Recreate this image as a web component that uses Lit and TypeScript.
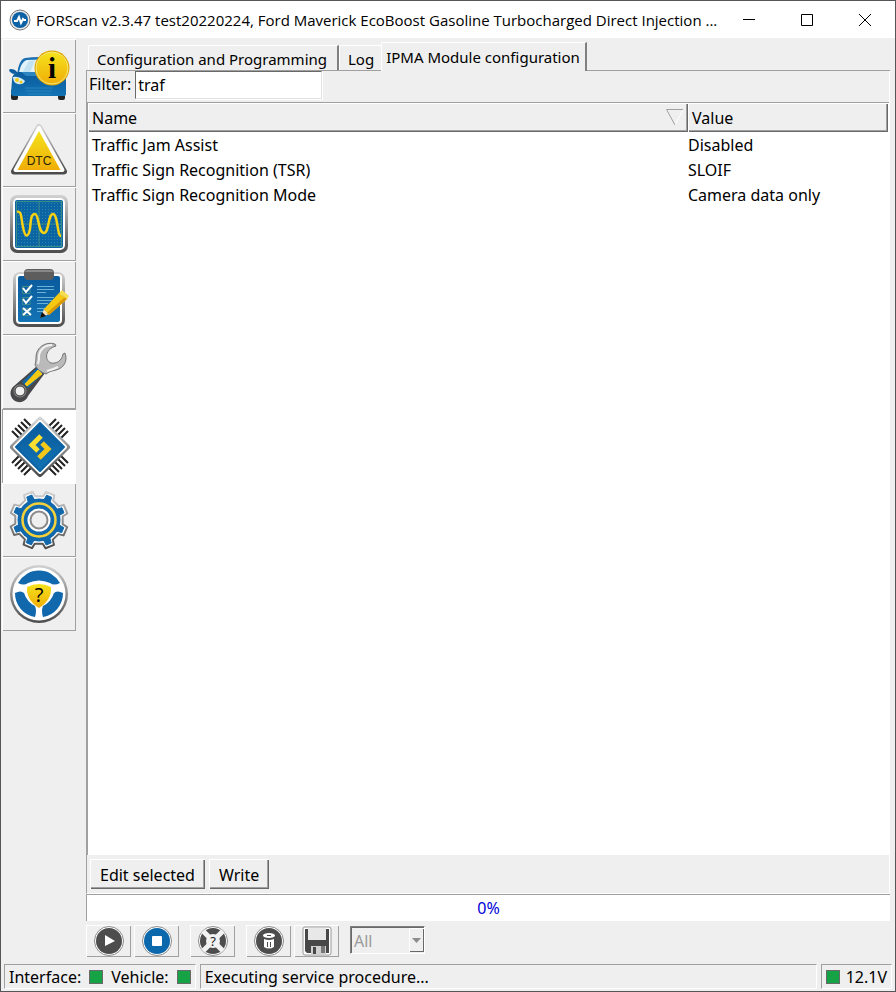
import { LitElement, html, css, svg } from "lit";
import { customElement, state } from "lit/decorators.js";
import { classMap } from "lit/directives/class-map.js";

const polar = (r: number, deg: number) => {
  const a = (deg * Math.PI) / 180;
  return `${(37 + r * Math.cos(a)).toFixed(2)} ${(37 + r * Math.sin(a)).toFixed(2)}`;
};

// Outline of an eight-tooth gear centred on 37,37; widths are half angles in degrees.
const gear = (tip: number, root: number, tipWidth: number, rootWidth: number) => {
  const pts: string[] = [];
  for (let i = 0; i < 8; i++) {
    const c = i * 45 - 67;
    pts.push(
      polar(root, c - rootWidth),
      polar(tip, c - tipWidth),
      polar(tip, c + tipWidth),
      polar(root, c + rootWidth)
    );
  }
  return `M${pts.join("L")}Z`;
};

const defs = svg`<defs>
  <linearGradient id="steel" x1="0" y1="0" x2="0" y2="1">
    <stop offset="0" stop-color="#d2d2d2"/><stop offset="1" stop-color="#4c4c4c"/>
  </linearGradient>
  <linearGradient id="gold" x1="0" y1="0" x2="0" y2="1">
    <stop offset="0" stop-color="#f5e21c"/><stop offset="1" stop-color="#f0ae08"/>
  </linearGradient>
  <linearGradient id="blue" x1="0" y1="0" x2="0" y2="1">
    <stop offset="0" stop-color="#0a5a9c"/><stop offset="1" stop-color="#1273b4"/>
  </linearGradient>
  <pattern id="dots" width="3" height="3" patternUnits="userSpaceOnUse">
    <rect x="1" y="1" width="1" height="1" fill="#2b86a6"/>
  </pattern>
</defs>`;

// Five pins stand square to each edge of the chip.
const pins = [0, 3, 6, 9, 12].map(
  (o) => svg`<path d="M${10 + o} ${22 - o}l9 9M${66 - o} ${22 - o}l-9 9M${10 + o} ${54 + o}l9 -9M${66 - o} ${54 + o}l-9 -9"/>`
);

const sideIcons = {
  info: svg`
    <path d="M15 36C16 28 18 20 23 19Q37 17 51 19Q57 22 60 36Z" fill="#1a6fb0"/>
    <path d="M17 34C18 27 21 22 25 21Q37 20 50 21L56 34Z" fill="#e2f2fa"/>
    <path d="M20 34L27 22L33 21L28 34Z" fill="#c2e2f2"/>
    <path d="M7 31Q8 29 13 31L16 34L12 35Q8 34 7 31Z" fill="#0d5fa2"/>
    <rect x="9" y="50" width="7" height="11" rx="2" fill="#242424"/>
    <rect x="56" y="50" width="7" height="11" rx="2" fill="#242424"/>
    <path d="M10 41Q10 34 17 33H57Q63 34 64 41V55Q64 57 61 57H12Q9 57 9 54Z" fill="url(#blue)"/>
    <path d="M19 33H56L50 37H24Z" fill="#2c84c0"/>
    <path d="M11 38Q17 37 23 42Q21 46 16 45Q11 44 11 38Z" fill="#d6edf5"/>
    <circle cx="15" cy="41" r="2" fill="#f2c812"/><circle cx="19" cy="43" r="1.500" fill="#f2c812"/>
    <path d="M23 49H51M24 52H50M26 55H48" stroke="#2a83be" fill="none"/>
    <circle cx="50" cy="29" r="17.500" fill="#e0a808"/>
    <circle cx="50" cy="29" r="16" fill="url(#gold)" stroke="#f7e878"/>
    <text x="50" y="39" text-anchor="middle" font-family="Liberation Serif, serif" font-weight="bold" font-size="29">i</text>`,
  dtc: svg`
    <path d="M37 14L62 58.500H12Z" fill="url(#steel)" stroke="url(#steel)" stroke-width="6" stroke-linejoin="round"/>
    <path d="M37 15L60.500 57H13.500Z" fill="#fff" stroke="#fff" stroke-width="4" stroke-linejoin="round"/>
    <path d="M37 18L58.500 57H15.500Z" fill="url(#gold)"/>
    <text x="37" y="52" text-anchor="middle" font-family="Liberation Sans, sans-serif" font-size="12" fill="#2c2508">DTC</text>`,
  scope: svg`
    <rect x="8" y="8" width="58" height="58" rx="7" fill="url(#steel)"/>
    <rect x="11" y="11" width="52" height="52" rx="5" fill="#fff"/>
    <rect x="13" y="13" width="48" height="48" rx="2" fill="#0b64a4"/>
    <rect x="15" y="15" width="44" height="44" fill="url(#dots)"/>
    <path d="M14 14.500H60M14.500 14V60M59.500 14V60M14 59.500H60M37 14V60M14 37H60" stroke="#3d8b87" fill="none"/>
    <path d="M15 25C20 23 19 32 21 40C23 51 26 51 28 42C29 32 29 27 33 27C37 27 36 46 42 46C47 46 46 27 51 27C56 27 55 49 59 49" fill="none" stroke="#f5d013" stroke-width="2.500"/>`,
  tests: svg`
    <rect x="11" y="11" width="52" height="55" rx="7" fill="url(#steel)"/>
    <rect x="14" y="13" width="46" height="50" rx="4" fill="#fff"/>
    <rect x="16" y="15" width="42" height="46" rx="2" fill="url(#blue)"/>
    <rect x="22" y="8" width="30" height="11" rx="4" fill="#5d5d5d"/>
    <path d="M23 11Q23 9 26 9H48Q51 9 51 11Z" fill="#888"/>
    <path d="M20.500 25.500H28V32.500H20.500ZM20.500 36.500H28V43.500H20.500ZM20.500 47.500H28V54.500H20.500Z" fill="none" stroke="#3d8b87"/>
    <path d="M21 27L24 31L30 24M21 38L24 42L30 35M21 47L29 54M29 47L21 54" stroke="#fff" stroke-width="2" fill="none"/>
    <path d="M35 25.500H52M35 28.500H52M35 31.500H44M35 36.500H52M35 39.500H50M35 42.500H46M35 47.500H44M35 50.500H42" stroke="#6db0d6" fill="none"/>
    <path d="M38 57L42 48L47 53Z" fill="#f6e2b6"/>
    <path d="M38 57L40 51L44 55Z" fill="#111"/>
    <path d="M42 48L57 32L65 38L47 54Z" fill="#f5c913"/>
    <path d="M45 52L63 36L65 38L47 54Z" fill="#d99808"/>
    <path d="M57 32L60 29L67 35L65 38Z" fill="#f9dc50"/>`,
  wrench: svg`
    <path d="M35 31L12 51A9 9 0 1 0 26 61L43 38Z" fill="#48484a"/>
    <path d="M35 33L20 47L26 53L41 38Z" fill="#1268a8"/>
    <path d="M36 35L23 49L25 51L40 39Z" fill="#f6ca12" stroke="#f6ca12"/>
    <circle cx="18" cy="56" r="6.500" fill="#8a8a8a"/>
    <circle cx="18" cy="56" r="5" fill="#efefef" stroke="#333"/>
    <path d="M53 9C43 6 34 13 34 22Q34 28 33 30Q37 37 44 39Q47 36 54 35C62 33 66 26 63 18L61 19C60 26 54 29 49 28C42 25 43 14 54 11Z" fill="#bababa" stroke="#747474"/>
    <path d="M50 10C42 10 36 16 37 24L36 29M45 36Q52 34 56 32" fill="none" stroke="#f2f2f2" stroke-width="2"/>`,
  chip: svg`
    <g stroke="#222" stroke-width="2">${pins}</g>
    <path d="M38 11L65 38L38 65L11 38Z" fill="url(#steel)" stroke="url(#steel)" stroke-width="6" stroke-linejoin="round"/>
    <path d="M38 13L63 38L38 63L13 38Z" fill="#fff" stroke="#fff" stroke-width="4" stroke-linejoin="round"/>
    <path d="M38 14L62 38L38 62L14 38Z" fill="url(#blue)" stroke="#0d62a4" stroke-width="2" stroke-linejoin="round"/>
    <path d="M39 27L30 36L36 42" fill="none" stroke="#f8df30" stroke-width="5"/>
    <path d="M40 34L46 40L37 49" fill="none" stroke="#f4c818" stroke-width="5"/>`,
  gear: svg`
    <path d="${gear(29, 24, 9, 13)}" fill="#fff" stroke="url(#steel)" stroke-width="2" stroke-linejoin="round"/>
    <path d="${gear(26, 21, 6, 9)}" fill="#1268ac" stroke="#1268ac" stroke-linejoin="round"/>
    <circle cx="37" cy="37" r="21.500" fill="#1268ac"/>
    <circle cx="37" cy="37" r="16.500" fill="none" stroke="#f3d13a" stroke-width="2.500"/>
    <circle cx="37" cy="37" r="11.500" fill="#fff"/>
    <circle cx="37" cy="37" r="8.500" fill="#efefef" stroke="#8a8a8a" stroke-width="2"/>`,
  wheel: svg`
    <circle cx="37" cy="37" r="29" fill="url(#steel)"/>
    <circle cx="37" cy="37" r="26.500" fill="#fff"/>
    <path d="M16 26A24 24 0 0 1 58 26Q52 29 48 26Q37 21 26 26Q22 29 16 26Z" fill="#1268ac"/>
    <path d="M13 36Q19 33 22 36Q25 45 33 49Q35 54 33 60A24 24 0 0 1 13 36Z" fill="#1268ac"/>
    <path d="M61 36Q55 33 52 36Q49 45 41 49Q39 54 41 60A24 24 0 0 0 61 36Z" fill="#1268ac"/>
    <path d="M25 30Q37 24 49 30Q50 43 37 51Q24 43 25 30Z" fill="url(#gold)"/>
    <text x="37" y="45" text-anchor="middle" font-family="Noto Sans, sans-serif" font-size="20">?</text>`,
};

const disc = (fill: string) => svg`
  <circle cx="16" cy="16" r="14.500" fill="#fff" stroke="#8c8c8c"/>
  <circle cx="16" cy="16" r="13" fill="${fill}"/>`;

const toolIcons = {
  play: svg`${disc("#4d4d4d")}<path d="M12 10L22 16L12 21Z" fill="#fff"/>`,
  stop: svg`${disc("#0b68ac")}<rect x="11" y="11" width="10" height="10" rx="1" fill="#fff"/>`,
  help: svg`${disc("#4d4d4d")}
    <path d="M6 6L26 26M26 6L6 26" stroke="#f2f2f2" stroke-width="5"/>
    <circle cx="16" cy="16" r="7" fill="#f2f2f2"/>
    <text x="16" y="21" text-anchor="middle" font-family="Noto Sans, sans-serif" font-size="13" fill="#222">?</text>`,
  trash: svg`${disc("#4d4d4d")}
    <ellipse cx="16" cy="10.500" rx="6" ry="2.500" fill="#fff"/>
    <path d="M14 10.500H18" stroke="#4d4d4d"/>
    <path d="M11 14Q16 16 21 14V22Q16 25 11 22Z" fill="#fff"/>
    <path d="M14.500 17V22M17.500 17V22" stroke="#4d4d4d"/>`,
  save: svg`
    <rect x="2" y="2" width="28" height="28" rx="2" fill="#fff" stroke="#999"/>
    <path d="M4 4H28V28H6L4 26Z" fill="#484848"/>
    <rect x="7" y="3" width="18" height="12" fill="#e8e8e8"/>
    <rect x="10" y="21" width="15" height="8" fill="#d0d0d0"/>
    <rect x="12" y="22" width="3" height="7" fill="#484848"/>
    <path d="M20 21H24V28H20Z" fill="#777"/>`,
};

type SideKey = keyof typeof sideIcons;
type ToolKey = keyof typeof toolIcons;

const sections: { key: SideKey; label: string }[] = [
  { key: "info", label: "Vehicle information" },
  { key: "dtc", label: "Trouble codes" },
  { key: "scope", label: "Live data" },
  { key: "tests", label: "Tests" },
  { key: "wrench", label: "Service functions" },
  { key: "chip", label: "Configuration and programming" },
  { key: "gear", label: "Settings" },
  { key: "wheel", label: "Help" },
];

const tools: { key: ToolKey; label: string; gap?: boolean }[] = [
  { key: "play", label: "Run" },
  { key: "stop", label: "Stop" },
  { key: "help", label: "Help", gap: true },
  { key: "trash", label: "Clear", gap: true },
  { key: "save", label: "Save" },
];

const settings = [
  ["Traffic Jam Assist", "Disabled"],
  ["Traffic Sign Recognition (TSR)", "SLOIF"],
  ["Traffic Sign Recognition Mode", "Camera data only"],
];

@customElement("app-root")
export class AppRoot extends LitElement {
  @state() private section: SideKey = "chip";
  @state() private tab = 2;
  @state() private filter = "traf";

  static styles = css`
    :host {
      display: block;
      font: 16px/24px "Noto Sans", Tahoma, sans-serif;
      color: #000;
    }
    * {
      box-sizing: border-box;
    }
    button,
    input,
    select {
      font: inherit;
      color: inherit;
      margin: 0;
      padding: 0;
      border: 0;
      border-radius: 0;
      background: none;
    }
    svg {
      display: block;
    }
    .window {
      display: flex;
      flex-direction: column;
      min-height: 100vh;
      background: #efefef;
      border: 1px solid #55555a;
    }
    .titlebar {
      display: flex;
      align-items: center;
      height: 37px;
      padding: 0 1px 0 8px;
      background: #fff;
    }
    .title {
      flex: 1;
      min-width: 0;
      margin-left: 5px;
      font: 15px/22px "Open Sans", "Segoe UI", sans-serif;
      overflow: hidden;
      text-overflow: ellipsis;
      white-space: nowrap;
    }
    .caption {
      display: flex;
      align-items: center;
      justify-content: center;
      width: 58px;
      height: 36px;
    }
    .body {
      flex: 1;
      display: flex;
      padding: 1px 5px 0 1px;
    }
    .sidebar {
      width: 74px;
      flex: none;
    }
    .section {
      display: block;
      width: 74px;
      height: 74px;
      box-shadow: inset 1px 1px #fff, inset -1px -1px #a0a0a0;
    }
    .section.current {
      background: #fff;
      box-shadow: inset 1px 1px #a0a0a0;
    }
    .main {
      flex: 1;
      min-width: 0;
      display: flex;
      flex-direction: column;
      margin-left: 10px;
    }
    .tabs {
      display: flex;
      align-items: flex-end;
      height: 32px;
      padding-left: 2px;
      box-shadow: inset 0 -1px #a0a0a0;
    }
    .tab {
      height: 25px;
      padding: 2px 8px 0;
      margin-bottom: 1px;
      font-size: 15px;
      line-height: 20px;
      border-top: 1px solid #fff;
      border-left: 1px solid #fff;
      border-right: 2px solid #808080;
      border-top-left-radius: 2px;
      white-space: nowrap;
    }
    .tab:first-child {
      padding: 2px 10px 0 8px;
    }
    .tab.beside {
      padding: 2px 7px 0 8px;
      border-right: 0;
    }
    .tab.current {
      height: 29px;
      padding: 0 5px 0 4px;
      margin-bottom: 0;
      background: #efefef;
    }
    .panel {
      flex: 1;
      display: flex;
      flex-direction: column;
      border-left: 1px solid #a0a0a0;
      border-right: 1px solid #fff;
      border-bottom: 1px solid #fff;
    }
    .filter {
      display: flex;
      height: 31px;
      padding-left: 2px;
      line-height: 26px;
    }
    .field {
      width: 187px;
      height: 28px;
      margin-left: 4px;
      padding-left: 2px;
      background: #fff;
      border: 1px solid;
      border-color: #696969 #e3e3e3 #e3e3e3 #696969;
      box-shadow: 1px 1px #fff;
      outline: 0;
    }
    .list {
      flex: 1;
      background: #fff;
      border-left: 1px solid #a0a0a0;
      border-top: 1px solid #a0a0a0;
    }
    .grid {
      width: 100%;
      table-layout: fixed;
      border-collapse: separate;
      border-spacing: 0;
    }
    .grid th {
      height: 29px;
      padding: 0 4px;
      font-weight: normal;
      text-align: left;
      background: #efefef;
      box-shadow: inset 1px 1px #fff, inset -1px -1px #696969, inset -2px -2px #a0a0a0;
    }
    .grid .value {
      width: 201px;
      border-right: 1px solid #fff;
    }
    .sortable {
      display: flex;
      align-items: center;
      justify-content: space-between;
    }
    .grid td {
      height: 25px;
      padding: 0 4px;
      line-height: 25px;
    }
    .grid td.setting {
      padding: 0;
    }
    .grid tbody::before {
      content: "";
      display: block;
      height: 1px;
    }
    .actions {
      display: flex;
      gap: 4px;
      padding: 4px 4px 4px 3px;
    }
    .action {
      height: 30px;
      padding: 1px 10px 0;
      background: #efefef;
      box-shadow: inset 1px 1px #fff, inset -1px -1px #696969, inset -2px -2px #a0a0a0;
    }
    .progress {
      height: 27px;
      line-height: 27px;
      text-align: center;
      color: #0000d8;
      background: #fff;
      border-left: 1px solid #a0a0a0;
      border-top: 1px solid #a0a0a0;
    }
    .toolbar {
      display: flex;
      gap: 3px;
      padding: 4px 0 7px;
    }
    .tool {
      display: flex;
      align-items: center;
      justify-content: center;
      width: 45px;
      height: 32px;
      box-shadow: inset 1px 1px #fff, inset -1px -1px #a0a0a0;
    }
    .tool.apart {
      margin-left: 8px;
    }
    .picker {
      display: grid;
      width: 75px;
      height: 28px;
      margin: 1px 0 0 8px;
      border: 1px solid;
      border-color: #808080 #fff #fff #808080;
      box-shadow: inset 1px 1px #696969;
    }
    .picker select {
      grid-area: 1 / 1;
      appearance: none;
      padding: 1px 20px 0 3px;
      color: #9a9a9a;
      opacity: 1;
    }
    .arrow {
      grid-area: 1 / 1;
      justify-self: end;
      display: flex;
      align-items: center;
      justify-content: center;
      width: 15px;
      margin: 1px 0;
      pointer-events: none;
      box-shadow: inset 1px 1px #fff, inset -1px -1px #696969;
    }
    .status {
      display: flex;
      gap: 4px;
      padding: 0 3px 2px;
      white-space: nowrap;
    }
    .cell {
      display: flex;
      align-items: center;
      gap: 8px;
      height: 25px;
      padding: 0 4px;
      border: 1px solid;
      border-color: #a0a0a0 #fff #fff #a0a0a0;
    }
    .cell.message {
      flex: 1;
      min-width: 0;
    }
    .cell.volts {
      gap: 6px;
    }
    .lamp {
      width: 14px;
      height: 14px;
      background: #16a345;
      border: 1px solid #696969;
    }
  `;

  render() {
    const rows = settings.filter(([name]) => name.toLowerCase().includes(this.filter.toLowerCase()));
    const tabs = ["Configuration and Programming", "Log", "IPMA Module configuration"];
    return html`
      <div class="window">
        <header class="titlebar">
          <svg width="22" height="22" viewBox="0 0 22 22">
            <circle cx="11" cy="11" r="10" fill="#e8e8e8" stroke="#777" />
            <circle cx="11" cy="11" r="8" fill="#0c62a4" />
            <path d="M5 12H8L10 8L12 14L14 10L15 11H17" fill="none" stroke="#fff" stroke-width="2" />
          </svg>
          <div class="title">FORScan v2.3.47 test20220224, Ford Maverick EcoBoost Gasoline Turbocharged Direct Injection ...</div>
          <button class="caption" aria-label="Minimize">
            <svg width="12" height="12" viewBox="0 0 12 12"><path d="M0 5.500H12" stroke="#000" /></svg>
          </button>
          <button class="caption" aria-label="Maximize">
            <svg width="12" height="12" viewBox="0 0 12 12"><path d="M.5 .5H11.500V11.500H.5Z" fill="none" stroke="#000" /></svg>
          </button>
          <button class="caption" aria-label="Close">
            <svg width="12" height="12" viewBox="0 0 12 12"><path d="M0 0L12 12M12 0L0 12" stroke="#000" /></svg>
          </button>
        </header>
        <div class="body">
          <nav class="sidebar">
            ${sections.map(
              (s) => html`<button
                class=${classMap({ section: true, current: s.key === this.section })}
                aria-label=${s.label}
                @click=${() => (this.section = s.key)}
              >
                <svg width="74" height="74" viewBox="0 0 74 74">${defs}${sideIcons[s.key]}</svg>
              </button>`
            )}
          </nav>
          <main class="main">
            <div class="tabs" role="tablist">
              ${tabs.map(
                (t, i) => html`<button
                  role="tab"
                  aria-selected=${i === this.tab}
                  class=${classMap({ tab: true, current: i === this.tab, beside: i === this.tab - 1 })}
                  @click=${() => (this.tab = i)}
                >${t}</button>`
              )}
            </div>
            <section class="panel">
              <div class="filter">
                <label for="filter">Filter:</label>
                <input
                  id="filter"
                  class="field"
                  type="text"
                  .value=${this.filter}
                  @input=${(e: Event) => (this.filter = (e.target as HTMLInputElement).value)}
                />
              </div>
              <div class="list">
                <table class="grid">
                  <thead>
                    <tr>
                      <th>
                        <div class="sortable">
                          Name
                          <svg width="18" height="17" viewBox="0 0 18 17">
                            <path d="M17 1L9 16" stroke="#fff" />
                            <path d="M17 .5H.5L9 16" fill="none" stroke="#a0a0a0" />
                          </svg>
                        </div>
                      </th>
                      <th class="value">Value</th>
                    </tr>
                  </thead>
                  <tbody>
                    ${rows.map(([name, value]) => html`<tr><td>${name}</td><td class="setting">${value}</td></tr>`)}
                  </tbody>
                </table>
              </div>
              <div class="actions">
                <button class="action">Edit selected</button>
                <button class="action">Write</button>
              </div>
            </section>
            <div class="progress" role="progressbar" aria-valuenow="0">0%</div>
            <div class="toolbar">
              ${tools.map(
                (t) => html`<button class=${classMap({ tool: true, apart: !!t.gap })} aria-label=${t.label}>
                  <svg width="32" height="32" viewBox="0 0 32 32">${toolIcons[t.key]}</svg>
                </button>`
              )}
              <div class="picker">
                <select aria-label="Module" disabled><option>All</option></select>
                <span class="arrow">
                  <svg width="9" height="5" viewBox="0 0 9 5"><path d="M0 0H9L4.500 5Z" fill="#8c8c8c" /></svg>
                </span>
              </div>
            </div>
          </main>
        </div>
        <footer class="status">
          <div class="cell">
            <span>Interface:</span><span class="lamp"></span><span>Vehicle:</span><span class="lamp"></span>
          </div>
          <div class="cell message">Executing service procedure...</div>
          <div class="cell volts"><span class="lamp"></span><span>12.1V</span></div>
        </footer>
      </div>
    `;
  }
}
